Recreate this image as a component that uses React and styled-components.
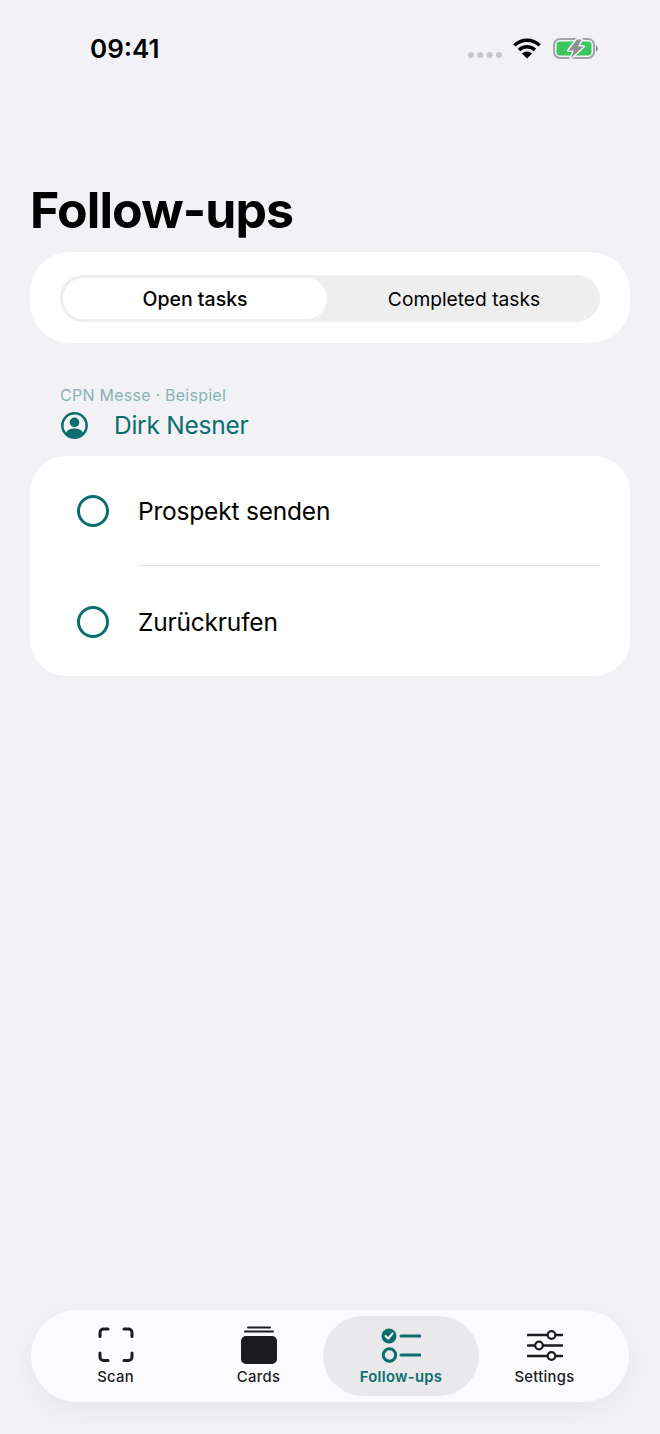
import React from 'react';
import styled, { createGlobalStyle } from 'styled-components';

const teal = '#0b6e6e';
const ink = '#1c1c1e';

const GlobalStyle = createGlobalStyle`
    * {
        box-sizing: border-box;
    }

    body {
        margin: 0;
        background: #f1f1f6;
        font-family: Inter, "Noto Sans", "Liberation Sans", sans-serif;
        color: #000;
    }
`;

const Page = styled.div`
    height: 1434px;
    display: flex;
    flex-direction: column;
    overflow: hidden;
`;

const StatusBar = styled.div`
    height: 96px;
    padding: 32px 60px 0 90px;
    display: flex;
    align-items: flex-start;
    justify-content: space-between;
`;

const Clock = styled.span`
    font-size: 26px;
    line-height: 33px;
    font-weight: 600;
`;

const StatusIcons = styled.div`
    display: flex;
    align-items: flex-start;
    margin-top: 6px;
`;

const SignalDots = styled.svg`
    display: block;
    margin: 14px 11px 0 0;
`;

const Battery = styled.svg`
    display: block;
    margin-left: 12px;
`;

const Main = styled.main`
    flex: 1;
    padding: 0 30px;
`;

const Title = styled.h1`
    margin: 0;
    padding-top: 81px;
    height: 156px;
    font-size: 50px;
    line-height: 66px;
    font-weight: 700;
    letter-spacing: -0.9px;
`;

const FilterCard = styled.section`
    background: #fff;
    border-radius: 40px;
    height: 91px;
    padding: 23px 30px 21px;
`;

const Segmented = styled.div`
    height: 47px;
    padding: 3px;
    border-radius: 24px;
    background: #eeeeef;
    display: grid;
    grid-template-columns: 264px 1fr;
`;

const Segment = styled.div`
    border-radius: 21px;
    display: flex;
    align-items: center;
    justify-content: center;
    padding-left: ${({ $active }) => ($active ? '0' : '4px')};
    font-size: ${({ $active }) => ($active ? '19.5px' : '19.2px')};
    font-weight: ${({ $active }) => ($active ? 500 : 400)};
    background: ${({ $active }) => ($active ? '#fff' : 'transparent')};
`;

const GroupHeader = styled.div`
    padding: 42px 30px 15px;
`;

const GroupSource = styled.div`
    font-size: 16px;
    line-height: 20px;
    letter-spacing: 0.25px;
    color: #86b5b5;
`;

const GroupContact = styled.div`
    display: flex;
    align-items: center;
    gap: 26px;
    margin-top: 4px;
    padding-left: 1px;
    font-size: 24.5px;
    line-height: 32px;
    letter-spacing: -0.25px;
    color: ${teal};
`;

const TaskCard = styled.section`
    background: #fff;
    border-radius: 36px;
    height: 220px;
    padding-left: 47px;
`;

const TaskRow = styled.div`
    height: 110px;
    display: flex;
    align-items: center;
    gap: 29px;
`;

const TaskCircle = styled.span`
    flex: none;
    width: 32px;
    height: 32px;
    border: 3px solid ${teal};
    border-radius: 50%;
`;

const TaskText = styled.span`
    font-size: 24.5px;
    line-height: 32px;
    letter-spacing: -0.2px;
`;

const Divider = styled.div`
    height: 1px;
    margin: -1px 30px 1px 61px;
    background: #e4e4e6;
`;

const TabBar = styled.nav`
    flex: none;
    height: 92px;
    margin: 0 31px 32px;
    padding: 6px 13px;
    border-radius: 46px;
    background: #fbfbfd;
    box-shadow: 0 8px 30px rgba(0, 0, 0, 0.05);
    display: grid;
    grid-template-columns: repeat(4, 143px);
`;

const Tab = styled.div`
    justify-self: center;
    width: ${({ $active }) => ($active ? '156px' : '143px')};
    margin-right: ${({ $active }) => ($active ? '1px' : '0')};
    height: 80px;
    border-radius: 40px;
    padding-top: 9px;
    display: flex;
    flex-direction: column;
    align-items: center;
    background: ${({ $active }) => ($active ? '#e9e9ec' : 'transparent')};
    color: ${({ $active }) => ($active ? teal : ink)};
`;

const TabIcon = styled.svg`
    display: block;
    flex: none;
`;

const TabLabel = styled.span`
    margin-top: 3px;
    font-size: 14.8px;
    line-height: 19px;
    letter-spacing: 0.3px;
    font-weight: ${({ $active }) => ($active ? 600 : 500)};
`;

const WifiIcon = () => (
    <svg width="28" height="21" viewBox="0 0 28 21" style={{ display: 'block' }}>
        <g fill="none" stroke="#000" strokeWidth="3.4">
            <path d="M1.4 7.4 A18 18 0 0 1 26.6 7.4" />
            <path d="M6 12 A11.4 11.4 0 0 1 22 12" />
        </g>
        <path d="M14 20.6 L8.9 15.6 A7.2 7.2 0 0 1 19.1 15.6 Z" fill="#000" />
    </svg>
);

// charging battery: the bolt sits on a halo that cuts the green level in two
const boltPath = 'M24 1.5 H28.5 L25 8.5 H30.5 L18 20 L21 12.5 H15.5 Z';

const BatteryIcon = () => (
    <Battery width="47" height="21" viewBox="0 0 47 21">
        <rect x="1" y="1" width="40" height="19" rx="6" fill="none" stroke="#a3a3a5" strokeWidth="2" />
        <path d="M43 7 Q46.5 10.5 43 14 Z" fill="#7d7d7f" />
        <rect x="3.5" y="3.5" width="35" height="14" rx="3.5" fill="#3cc75d" />
        <path d={boltPath} fill="#f1f1f6" stroke="#f1f1f6" strokeWidth="3" strokeLinejoin="round" />
        <path d={boltPath} fill="#8f8f91" />
    </Battery>
);

const ContactIcon = () => (
    <svg width="27" height="27" viewBox="0 0 26 26" style={{ display: 'block' }}>
        <circle cx="13" cy="13" r="11.7" fill="none" stroke={teal} strokeWidth="2.4" />
        <circle cx="13" cy="10" r="4.6" fill={teal} />
        <path d="M4.4 20.4 C6.5 16.6 9.5 15.8 13 15.8 C16.5 15.8 19.5 16.6 21.6 20.4 A12 12 0 0 1 4.4 20.4 Z" fill={teal} />
    </svg>
);

const ScanIcon = () => (
    <TabIcon width="38" height="40" viewBox="0 0 38 40" fill="none" stroke="currentColor" strokeWidth="3" strokeLinecap="round">
        <path d="M3 11.5 V7.5 A3.5 3.5 0 0 1 6.5 4 H11" />
        <path d="M27 4 H31.5 A3.5 3.5 0 0 1 35 7.5 V11.5" />
        <path d="M35 28 V32 A3.5 3.5 0 0 1 31.5 35.5 H27" />
        <path d="M11 35.5 H6.5 A3.5 3.5 0 0 1 3 32 V28" />
    </TabIcon>
);

const CardsIcon = () => (
    <TabIcon width="38" height="40" viewBox="0 0 38 40">
        <rect x="1" y="11" width="36" height="28" rx="5" fill="currentColor" />
        <path d="M5 6.5 H33 M8 2.5 H30" stroke="currentColor" strokeWidth="2" strokeLinecap="round" />
    </TabIcon>
);

const FollowUpsIcon = () => (
    <TabIcon width="40" height="40" viewBox="0 0 40 40" fill="none">
        <circle cx="8" cy="11" r="7.5" fill="currentColor" />
        <path d="M4.6 11 L7.2 13.6 L11.6 8.4" stroke="#fff" strokeWidth="2" strokeLinecap="round" strokeLinejoin="round" />
        <path d="M20 11 H39 M20 30 H39" stroke="currentColor" strokeWidth="3" strokeLinecap="round" />
        <circle cx="8.5" cy="30" r="6.2" stroke="currentColor" strokeWidth="3" />
    </TabIcon>
);

const SettingsIcon = () => (
    <TabIcon width="36" height="40" viewBox="0 0 36 40" fill="none">
        <path d="M1 10 H35 M1 20.5 H35 M1 31 H35" stroke="currentColor" strokeWidth="2.6" strokeLinecap="round" />
        <circle cx="24.5" cy="10" r="3.8" fill="#fbfbfd" stroke="currentColor" strokeWidth="2.2" />
        <circle cx="12" cy="20.5" r="3.8" fill="#fbfbfd" stroke="currentColor" strokeWidth="2.2" />
        <circle cx="24.5" cy="31" r="3.8" fill="#fbfbfd" stroke="currentColor" strokeWidth="2.2" />
    </TabIcon>
);

const tabs = [
    { label: 'Scan', Icon: ScanIcon },
    { label: 'Cards', Icon: CardsIcon },
    { label: 'Follow-ups', Icon: FollowUpsIcon, active: true },
    { label: 'Settings', Icon: SettingsIcon },
];

const App = () => {
    return (
        <Page>
            <GlobalStyle />
            <StatusBar>
                <Clock>09:41</Clock>
                <StatusIcons>
                    <SignalDots width="34" height="6" viewBox="0 0 34 6" fill="#c6c6c9">
                        <circle cx="3" cy="3" r="3" />
                        <circle cx="12.3" cy="3" r="3" />
                        <circle cx="21.6" cy="3" r="3" />
                        <circle cx="31" cy="3" r="3" />
                    </SignalDots>
                    <WifiIcon />
                    <BatteryIcon />
                </StatusIcons>
            </StatusBar>
            <Main>
                <Title>Follow-ups</Title>
                <FilterCard>
                    <Segmented>
                        <Segment $active>Open tasks</Segment>
                        <Segment>Completed tasks</Segment>
                    </Segmented>
                </FilterCard>
                <GroupHeader>
                    <GroupSource>CPN Messe · Beispiel</GroupSource>
                    <GroupContact>
                        <ContactIcon />
                        Dirk Nesner
                    </GroupContact>
                </GroupHeader>
                <TaskCard>
                    <TaskRow>
                        <TaskCircle />
                        <TaskText>Prospekt senden</TaskText>
                    </TaskRow>
                    <Divider />
                    <TaskRow>
                        <TaskCircle />
                        <TaskText>Zurückrufen</TaskText>
                    </TaskRow>
                </TaskCard>
            </Main>
            <TabBar>
                {tabs.map(({ label, Icon, active }) => (
                    <Tab key={label} $active={active}>
                        <Icon />
                        <TabLabel $active={active}>{label}</TabLabel>
                    </Tab>
                ))}
            </TabBar>
        </Page>
    );
};

export default App;
